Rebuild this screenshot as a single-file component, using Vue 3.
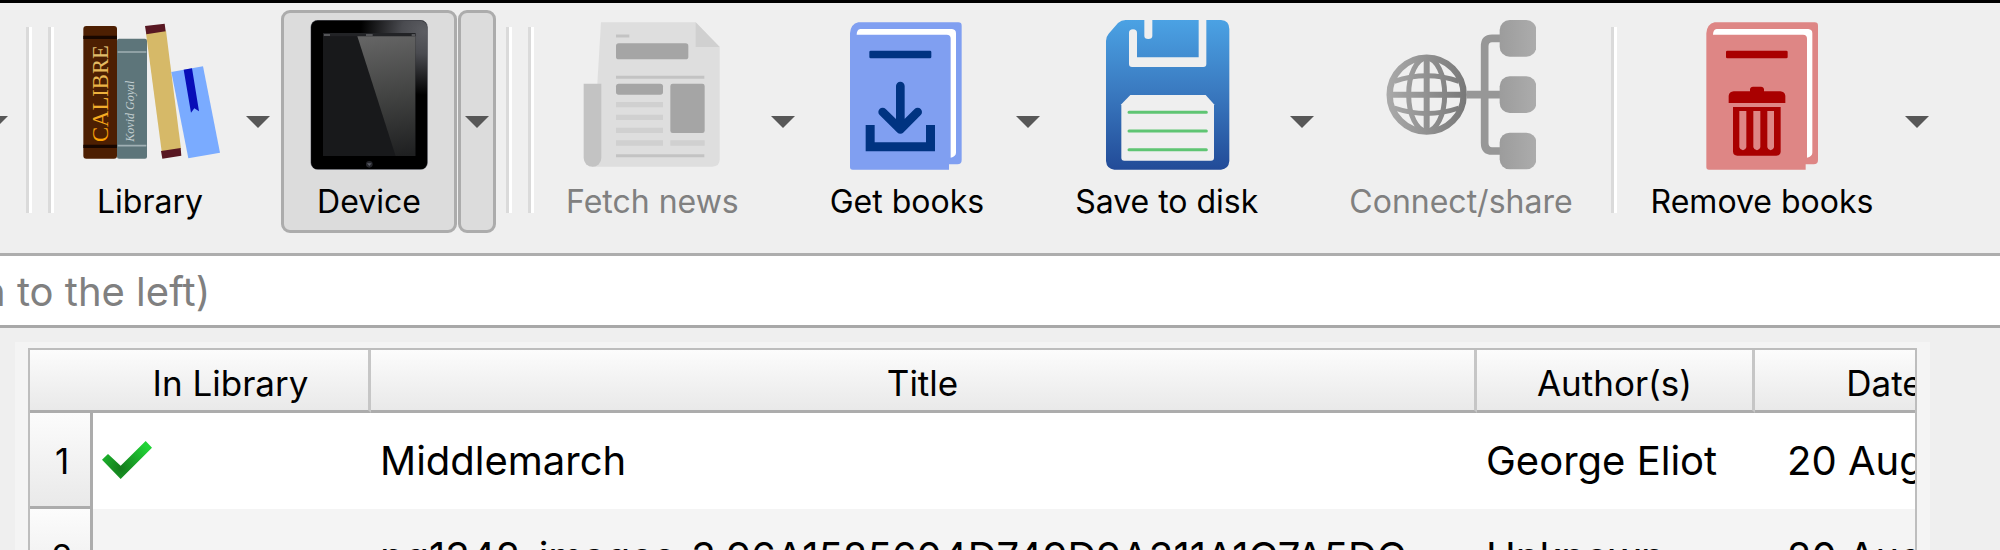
<template>
  <div class="window">
    <div class="toolbar" role="toolbar" aria-label="Main toolbar">
      <button class="menu clipped" aria-label="More"><span class="arrow"></span></button>
      <span class="sep first"></span>
      <span class="sep second"></span>

      <div class="tool">
        <button class="action">
          <svg viewBox="225 60 450 450" aria-hidden="true">
            <defs>
              <linearGradient id="gold" x1="0" x2="1" y1="0" y2="0">
                <stop offset="0" stop-color="#ffa200" />
                <stop offset="1" stop-color="#dcc078" />
              </linearGradient>
            </defs>
            <rect x="250" y="78" width="101" height="398" rx="9" fill="#4d1f02" />
            <path d="M250 112h101M250 439h101" stroke="#180700" stroke-width="10" />
            <rect x="351" y="116" width="90" height="360" rx="6" fill="#5d757a" />
            <path d="M353 156h86M353 437h86" stroke="#a0b0b4" stroke-width="5" />
            <text class="spine" transform="translate(323 426) rotate(-90)" fill="url(#gold)">CALIBRE</text>
            <text class="author" transform="translate(403 425) rotate(-90)">Kovid Goyal</text>
            <path d="M438 100L498 92L543 447L485 454Z" fill="#d6b968" />
            <path d="M435 78L494 71L497 94L439 103ZM483 453L542 444L544 467L487 476Z" fill="#581722" />
            <path d="M514 216L609 199L660 458L565 475Z" fill="#7aabff" />
            <path d="M551 209L576 205L597 334L583 325L573 338Z" fill="#080db8" />
          </svg>
          <span>Library</span>
        </button>
        <button class="menu" aria-label="Library menu"><span class="arrow"></span></button>
      </div>

      <div class="tool active">
        <button class="action" aria-pressed="true">
          <svg viewBox="72 60 450 450" aria-hidden="true">
            <defs>
              <radialGradient id="bezel" gradientUnits="userSpaceOnUse" cx="462" cy="95" r="190">
                <stop offset="0" stop-color="#5c5d62" />
                <stop offset=".35" stop-color="#4a4b50" />
                <stop offset="1" stop-color="#000" />
              </radialGradient>
              <linearGradient id="glare" gradientUnits="userSpaceOnUse" x1="330" y1="109" x2="390" y2="468">
                <stop offset="0" stop-color="#646464" />
                <stop offset=".5" stop-color="#424342" />
                <stop offset="1" stop-color="#1f2021" />
              </linearGradient>
            </defs>
            <rect x="123" y="61" width="349" height="447" rx="20" fill="#000" stroke="#4b4d57" stroke-width="2" />
            <rect x="124" y="62" width="347" height="445" rx="19" fill="url(#bezel)" />
            <rect x="159" y="99" width="277" height="369" fill="#18191b" />
            <path d="M159 99H436V109H159Z" fill="#222326" />
            <path d="M262 109H436V468H377Z" fill="url(#glare)" />
            <path d="M162 105h18M288 105h20M425 105h10" stroke="#66676a" stroke-width="4" />
            <circle cx="298" cy="493" r="10" fill="#25262b" />
            <path d="M291 490h14l-7 8z" fill="#5a5c66" />
          </svg>
          <span>Device</span>
        </button>
        <button class="menu" aria-label="Device menu"><span class="arrow"></span></button>
      </div>
      <span class="sep third"></span>
      <span class="sep second"></span>

      <div class="tool">
        <button class="action" disabled>
          <svg viewBox="114 60 450 450" aria-hidden="true">
            <path d="M186 67H470L542 141V478Q542 500 520 500H160Z" fill="#dedede" />
            <path d="M470 67L542 141H470Z" fill="#d0d0d0" />
            <path d="M134 251H187V474A26 26 0 0 1 134 474Z" fill="#c3c3c3" />
            <path d="M231 108h40M231 232h265M231 467h265" stroke="#c3c3c3" stroke-width="9" />
            <path d="M231 314h141M231 352h141M231 391h141M231 429h141M394 429h103" stroke="#d0d0d0" stroke-width="16" />
            <g fill="#a5a5a5">
              <rect x="231" y="130" width="217" height="48" rx="8" />
              <rect x="231" y="251" width="141" height="33" rx="8" />
              <rect x="394" y="251" width="103" height="148" rx="7" />
            </g>
          </svg>
          <span>Fetch news</span>
        </button>
        <button class="menu" aria-label="Fetch news menu"><span class="arrow"></span></button>
      </div>

      <div class="tool">
        <button class="action">
          <svg viewBox="66 60 450 450" aria-hidden="true">
            <path d="M145 67H445Q455 67 455 77V480Q455 493 442 493H417V509H128Q120 509 120 501V100Q122 72 145 67Z" fill="#809ff1" />
            <path d="M151 87H426Q438 88 438 100V458Q438 469 422 473V116Q422 104 410 104H140Q140 89 151 87Z" fill="#fff" />
            <rect x="178" y="152" width="186" height="23" rx="4" fill="#003381" />
            <path d="M271 258V388M218 336L271 388L323 336" fill="none" stroke="#003381" stroke-width="26" stroke-linecap="round" stroke-linejoin="round" />
            <path d="M167 375H194V427H348V375H375V454H167Z" fill="#003381" />
          </svg>
          <span>Get books</span>
        </button>
        <button class="menu" aria-label="Get books menu"><span class="arrow"></span></button>
      </div>

      <div class="tool">
        <button class="action">
          <svg viewBox="39 60 450 450" aria-hidden="true">
            <defs>
              <linearGradient id="floppy" x1="0" y1="0" x2="0" y2="1">
                <stop offset="0" stop-color="#4ba2e4" />
                <stop offset=".45" stop-color="#3b7cc2" />
                <stop offset="1" stop-color="#224b98" />
              </linearGradient>
            </defs>
            <path d="M140 60H426Q451 62 451 87V483Q449 507 426 509H106Q83 507 81 483V123Q81 110 89 101L117 69Q127 60 140 60Z" fill="url(#floppy)" />
            <path d="M359 60H382V192Q382 201 373 201H159Q150 201 150 192V99Q150 88 162 88Q174 88 174 99V172H359Z" fill="#efefef" />
            <path d="M196 60H220V108Q220 117 208 117Q196 117 196 108Z" fill="#efefef" />
            <path d="M154 285H380L405 313V473Q405 482 396 482H136Q127 482 127 473V313Z" fill="#efefef" />
            <path d="M150 337H382M150 393H382M150 449H382" stroke="#5fc573" stroke-width="9" stroke-linecap="round" />
          </svg>
          <span>Save to disk</span>
        </button>
        <button class="menu" aria-label="Save to disk menu"><span class="arrow"></span></button>
      </div>

      <div class="tool">
        <button class="action" disabled>
          <svg viewBox="141 60 450 450" aria-hidden="true">
            <defs>
              <linearGradient id="globe" gradientUnits="userSpaceOnUse" x1="143" y1="0" x2="383" y2="0">
                <stop offset="0" stop-color="#aaa" />
                <stop offset="1" stop-color="#787878" />
              </linearGradient>
              <linearGradient id="node" gradientUnits="userSpaceOnUse" x1="383" y1="0" x2="592" y2="0">
                <stop offset="0" stop-color="#8e8e8e" />
                <stop offset="1" stop-color="#acacac" />
              </linearGradient>
            </defs>
            <g fill="none" stroke="url(#globe)" stroke-width="15">
              <circle cx="263" cy="284" r="111" stroke-width="19" />
              <ellipse cx="263" cy="284" rx="54" ry="109" />
              <path d="M263.1 170L263 398M150 284.1L377 284" stroke-width="18" />
              <path d="M166 244Q263 211 360 244M166 324Q263 357 360 324" />
            </g>
            <path d="M383 284H490M490 115H459Q437 115 437 139V429Q437 453 459 453H490" fill="none" stroke="#979797" stroke-width="23" />
            <g fill="url(#node)">
              <rect x="482" y="60" width="110" height="110" rx="30" />
              <rect x="482" y="229" width="110" height="110" rx="30" />
              <rect x="482" y="398" width="110" height="110" rx="30" />
            </g>
          </svg>
          <span>Connect/share</span>
        </button>
      </div>
      <span class="sep last"></span>

      <div class="tool">
        <button class="action">
          <svg viewBox="252 60 450 450" aria-hidden="true">
            <path d="M335 67H635Q645 67 645 77V480Q645 493 632 493H608V509H318Q310 509 310 501V100Q312 72 335 67Z" fill="#de8685" />
            <path d="M341 87H616Q628 88 628 100V458Q628 469 612 473V116Q612 104 600 104H330Q330 89 341 87Z" fill="#fff" />
            <rect x="369" y="152" width="185" height="23" rx="4" fill="#a90000" />
            <path d="M377 309V287Q379 275 392 274H441V268Q442 260 450 260H474Q482 260 483 268V274H532Q545 275 547 287V309Z" fill="#a90000" />
            <path d="M390 321H533V454Q533 467 520 467H403Q390 467 390 454Z" fill="#a90000" />
            <path d="M409 333H430V442Q428 450 420 451Q411 450 409 442ZM451 333H472V442Q470 450 462 451Q453 450 451 442ZM493 333H513V442Q511 450 503 451Q495 450 493 442Z" fill="#de8685" />
          </svg>
          <span>Remove books</span>
        </button>
        <button class="menu" aria-label="Remove books menu"><span class="arrow"></span></button>
      </div>
    </div>

    <div class="search">
      <input type="text" aria-label="Search" placeholder="n to the left)" />
    </div>

    <div class="panel">
      <div class="view">
        <table>
          <colgroup>
            <col class="col-num" />
            <col class="col-library" />
            <col />
            <col class="col-author" />
            <col class="col-date" />
          </colgroup>
          <thead>
            <tr>
              <th class="corner"></th>
              <th>In Library</th>
              <th>Title</th>
              <th>Author(s)</th>
              <th>Date</th>
            </tr>
          </thead>
          <tbody>
            <tr v-for="(book, i) in books" :key="book.title">
              <th scope="row">{{ i + 1 }}</th>
              <td>
                <svg v-if="book.inLibrary" class="check" viewBox="0 0 150 114" role="img" aria-label="In library">
                  <defs>
                    <radialGradient id="tick" gradientUnits="userSpaceOnUse" cx="56" cy="82" r="100">
                      <stop offset="0" stop-color="#147a1c" />
                      <stop offset="1" stop-color="#20d335" />
                    </radialGradient>
                  </defs>
                  <path d="M0 56L18 39L56 74L131 0L150 20L56 114Z" fill="url(#tick)" />
                </svg>
              </td>
              <td>{{ book.title }}</td>
              <td>{{ book.author }}</td>
              <td class="date">{{ book.date }}</td>
            </tr>
          </tbody>
        </table>
      </div>
    </div>
  </div>
</template>

<script setup>
const books = [
  { title: 'Middlemarch', author: 'George Eliot', date: '20 Aug', inLibrary: true },
  { title: 'pg1342-images_3.96A1585604D749D9A311A1C7A5DC', author: 'Unknown', date: '20 Aug', inLibrary: false },
]
</script>

<style>
body {
  margin: 0;
  background: #efefef;
}
</style>

<style scoped>
.window {
  height: 100vh;
  display: flex;
  flex-direction: column;
  overflow: hidden;
  box-sizing: border-box;
  border-top: 3px solid #000;
  background: #efefef;
  color: #000;
  font-family: Inter, "Liberation Sans", sans-serif;
}

button {
  border: 0;
  margin: 0;
  padding: 0;
  background: none;
  font: inherit;
  color: inherit;
}

/* Toolbar */
.toolbar {
  flex: none;
  display: flex;
  padding: 7px 0 20px;
}

.tool {
  display: flex;
  flex: none;
  gap: 1px;
  margin-right: 4px;
}

.action,
.menu {
  box-sizing: border-box;
  height: 223px;
  flex: none;
}

.action {
  display: flex;
  flex-direction: column;
  align-items: center;
  min-width: 176px;
  padding: 10px 24px 0;
  font-size: 32px;
  line-height: 40px;
  white-space: nowrap;
}

.action svg {
  width: 150px;
  height: 150px;
  margin: 0 -24px 12px;
}

.action:disabled {
  color: #808080;
}

.menu {
  width: 38px;
  display: flex;
  align-items: center;
  justify-content: center;
}

.menu.clipped {
  margin-left: -23px;
}

.arrow {
  border: 12px solid transparent;
  border-top-color: #575757;
  border-bottom: 0;
}

.active .action,
.active .menu {
  background: #dcdcdc;
  border: 3px solid #acacac;
  border-radius: 9px;
}

.active .action {
  padding: 7px 21px 0;
}

.sep {
  flex: none;
  width: 3px;
  height: 186px;
  margin: 17px 16px 0 0;
  border-right: 3px solid #fff;
  background: #dadada;
}

.sep.first {
  margin-left: 11px;
}

.sep.second {
  margin-right: 8px;
}

.sep.third {
  margin-left: 6px;
}

.sep.last {
  margin-left: 10px;
  margin-right: 10px;
}

.spine {
  font: 68px "Liberation Serif", serif;
}

.author {
  font: italic 36px "Liberation Serif", serif;
  fill: #c3cfd1;
}

/* Search bar */
.search {
  flex: none;
  background: #fff;
  border-top: 3px solid #adadad;
  border-bottom: 3px solid #a8a8a8;
  overflow: hidden;
}

.search input {
  display: block;
  box-sizing: border-box;
  width: 100%;
  height: 69px;
  margin-left: -18px;
  padding: 2px 0 0;
  border: 0;
  outline: 0;
  background: none;
  font: 40px Inter, "Liberation Sans", sans-serif;
}

.search input::placeholder {
  color: #808080;
  opacity: 1;
}

/* Book list */
.panel {
  flex: 1;
  min-height: 0;
  margin: 14px 70px 0 15px;
  padding: 6px 13px 0;
  background: #f4f4f4;
  display: flex;
}

.view {
  flex: 1;
  min-width: 0;
  overflow: hidden;
  border: 2px solid #bdbdbd;
  border-bottom: 0;
  background: #fff;
}

table {
  width: calc(100% + 102px);
  table-layout: fixed;
  border-collapse: separate;
  border-spacing: 0;
}

.col-num {
  width: 63px;
}

.col-library,
.col-author {
  width: 278px;
}

.col-date {
  width: 262px;
}

th {
  box-sizing: border-box;
  padding: 0;
  font-size: 35px;
  font-weight: 400;
  text-align: center;
  background: linear-gradient(#fcfcfc, #e9e9e9);
}

thead th {
  height: 63px;
  padding-top: 6px;
  line-height: 42px;
  border-right: 3px solid #c6c6c6;
  border-bottom: 3px solid #acacac;
}

thead .corner {
  border-right: 0;
}

tbody th {
  height: 96px;
  padding: 2px 0 0 4px;
  border-right: 3px solid #acacac;
  border-bottom: 3px solid #acacac;
}

td {
  padding: 0 9px 2px;
  font-size: 40px;
  white-space: nowrap;
  overflow: hidden;
}

tbody tr:nth-child(even) td {
  background: #f4f4f4;
}

.date {
  padding-left: 32px;
}

.check {
  display: block;
  width: 50px;
  height: 38px;
}
</style>
